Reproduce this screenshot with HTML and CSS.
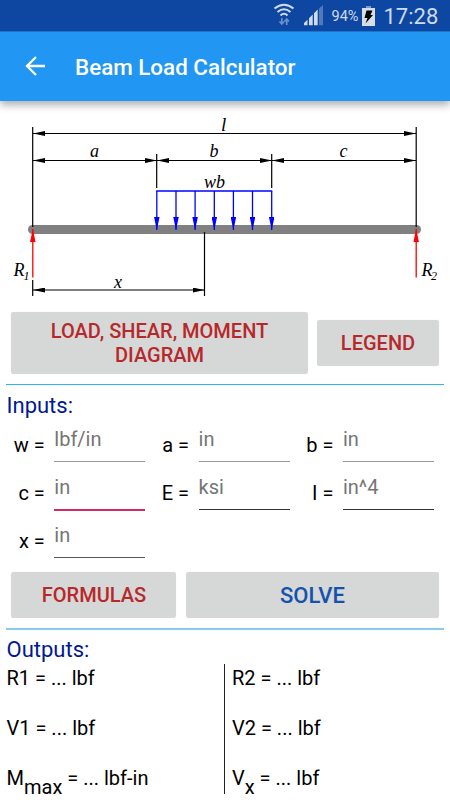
FILE: index.html
```html
<!DOCTYPE html>
<html lang="en">
<head>
<meta charset="utf-8">
<title>Beam Load Calculator</title>
<link rel="stylesheet" href="styles.css">
</head>
<body>
<header>
  <div class="status">
    <svg class="status-icons" width="54" height="31" viewBox="0 0 54 31">
      <g fill="none" stroke="#cfdaec" stroke-width="2">
        <path d="M1.500 8.500Q11 1 20.500 8.500"/><path d="M4.500 12Q11 6.500 17.500 12"/><path d="M7.500 15.500Q11 12 14.500 15.500"/>
      </g>
      <path d="M8.800 18v6M6.500 21.500l2.300 2.500 2.300-2.500M13.700 25v-6M11.400 21.500l2.300-2.500 2.300 2.500" fill="none" stroke="#6d8fc6" stroke-width="1.700"/>
      <path d="M31 25.300V23l3.500-3.300v5.600zM36 25.300v-7l3.700-3.700v10.700zM41 25.300V13.300l3.700-3.700v15.700z" fill="#cfdaec"/>
      <path d="M46 25.300V8.500L50 5v20.300z" fill="#5179b9"/>
    </svg>
    <span class="percent">94%</span>
    <svg class="battery" width="13" height="20" viewBox="0 0 13 20">
      <path d="M0 2h13v18H0z" fill="#d7deea"/>
      <path d="M4 0h5v2H4z" fill="#7c9acb"/>
      <path d="M4.500 4.500h6L8.500 9H11l-7.500 8.500L5.500 12H2.500z" fill="#000"/>
    </svg>
    <time class="clock">17:28</time>
  </div>
  <div class="appbar">
    <svg class="back" width="21" height="20" viewBox="0 0 21 20" fill="none" stroke="#fff" stroke-width="2.300"><path d="M20 10H2M11 1L2 10l9 9"/></svg>
    <h1>Beam Load Calculator</h1>
  </div>
</header>
<main>
  <svg class="diagram" width="450" height="200" viewBox="0 101 450 200">
    <defs>
      <marker id="k" viewBox="0 0 12 5" refX="12" refY="2.500" markerWidth="12" markerHeight="5" markerUnits="userSpaceOnUse" orient="auto-start-reverse"><path d="M0 0L12 2.500 0 5z"/></marker>
      <marker id="blue" viewBox="0 0 13 5" refX="13" refY="2.500" markerWidth="13" markerHeight="5.500" markerUnits="userSpaceOnUse" orient="auto" preserveAspectRatio="none"><path d="M0 0L13 2.500 0 5z" fill="#00f"/></marker>
      <marker id="red" viewBox="0 0 13 5" refX="13" refY="2.500" markerWidth="13" markerHeight="5.500" markerUnits="userSpaceOnUse" orient="auto" preserveAspectRatio="none"><path d="M0 0L13 2.500 0 5z" fill="red"/></marker>
    </defs>
    <path d="M32.500 229.500H416.500" stroke="#808080" stroke-width="9" stroke-linecap="round"/>
    <g stroke="#000" stroke-width="1.200" fill="none">
      <path d="M32.700 127V227M32.700 280V296M416.200 127V227M156.700 154V188M271.700 154V188M204.500 232V296"/>
      <g marker-start="url(#k)" marker-end="url(#k)">
        <path d="M33 133.500H416" /><path d="M33 160.500H157"/><path d="M157 160.500H272"/><path d="M272 160.500H416"/><path d="M33 290H204.500"/>
      </g>
    </g>
    <g stroke="#00f" stroke-width="1.300" fill="none">
      <path d="M156.200 191H272.200"/>
      <g marker-end="url(#blue)">
        <path d="M156.800 191V230"/><path d="M176 191V230"/><path d="M195.100 191V230"/><path d="M214.300 191V230"/><path d="M233.400 191V230"/><path d="M252.500 191V230"/><path d="M271.700 191V230"/>
      </g>
    </g>
    <g stroke="red" stroke-width="1.300" fill="none">
      <path d="M32.800 277.500V229" marker-end="url(#red)"/><path d="M416.200 277.500V229" marker-end="url(#red)"/>
    </g>
    <g class="dim">
      <text class="tall" x="221" y="130.500">l</text><text x="90" y="157">a</text><text x="209.500" y="157">b</text><text x="339.500" y="157">c</text>
      <text x="204" y="187.500">wb</text><text x="114" y="287.500">x</text>
      <text x="13.500" y="275.500">R</text><text class="small" x="23.500" y="279.500">1</text>
      <text x="421.500" y="275.500">R</text><text class="small" x="431" y="279.500">2</text>
    </g>
  </svg>
  <div class="buttons top">
    <button class="wide">LOAD, SHEAR, MOMENT<br>DIAGRAM</button>
    <button class="legend">LEGEND</button>
  </div>
  <hr>
  <h2>Inputs:</h2>
  <div class="fields">
    <label>w =<input placeholder="lbf/in"></label>
    <label>a =<input placeholder="in"></label>
    <label>b =<input placeholder="in"></label>
    <label>c =<input class="active" placeholder="in"></label>
    <label>E =<input class="dark" placeholder="ksi"></label>
    <label>I =<input class="dark" placeholder="in^4"></label>
    <label>x =<input class="mid" placeholder="in"></label>
  </div>
  <div class="buttons">
    <button class="formulas">FORMULAS</button>
    <button class="solve">SOLVE</button>
  </div>
  <hr class="pale">
  <h2>Outputs:</h2>
  <div class="outputs">
    <div class="col"><p>R1 = ... lbf</p><p>V1 = ... lbf</p><p>M<sub>max</sub> = ... lbf-in</p></div>
    <div class="col right"><p>R2 = ... lbf</p><p>V2 = ... lbf</p><p>V<sub>x</sub> = ... lbf</p></div>
  </div>
</main>
</body>
</html>
```
FILE: styles.css
```css
* { box-sizing: border-box; }
body { margin: 0; width: 450px; height: 800px; overflow: hidden; background: #fff; color: #000; font-family: Roboto, sans-serif; font-size: 20px; }
header { position: relative; height: 101px; background: #2196f3; box-shadow: 0 4px 8px rgba(0,0,0,.32); }
.status { display: flex; align-items: center; height: 31px; background: #0d47a1; color: #cfdaec; padding-left: 273px; }
.percent { font-size: 14.500px; width: 27px; margin-left: 4.500px; line-height: 31px; padding-top: 2px; }
.battery { margin-left: 3.500px; }
.clock { font-size: 22px; line-height: 31px; margin-left: 8.500px; padding-top: 2px; }
.appbar { display: flex; align-items: center; height: 70px; padding: 0 0 1px 25px; border-top: 1px solid #1a76cd; }
.back { display: block; }
h1 { margin: 2px 0 0 29px; color: #fff; font-size: 22.400px; font-weight: 500; line-height: 28px; }
.diagram { display: block; }
.dim { font: italic 18px "Liberation Serif", serif; }
.tall { font-size: 19px; }
.small { font-size: 12px; }
.buttons { display: flex; align-items: center; gap: 10px; padding: 0 11px; }
.buttons.top { height: 62px; margin-top: 11px; }
button { border: 0; border-radius: 3px; background: #d6d7d7; box-shadow: 0 0 1px rgba(0,0,0,.15); padding: 0; color: #b7282b; font: 500 20px/24px Roboto, sans-serif; height: 46px; }
.wide { width: 297px; height: 62px; }
.legend { width: 122px; margin-left: -1px; }
.formulas { width: 165px; padding-left: 1px; }
.solve { width: 253px; padding-top: 2px; color: #1353ad; font-size: 22px; }
hr { height: 1px; margin: 10px 6px 0; border: 0; background: #29b6f6; }
hr.pale { height: 2px; background: #87cceb; }
h2 { margin: 7px 0 0 6.500px; color: #001896; font-size: 22px; font-weight: 400; line-height: 28px; }
.fields { display: grid; grid-template-columns: repeat(3, 144.300px); grid-auto-rows: 48px; height: 145px; margin-top: 1px; padding-left: 1px; }
label { display: flex; justify-content: flex-end; align-items: flex-start; line-height: 24px; padding-top: 12px; white-space: pre; }
input { width: 91px; height: 40px; margin: -11px 0 0 9.500px; padding: 2px 0 7px; border: 0; border-bottom: 1px solid #999; border-radius: 0; outline: 0; background: transparent; font: 20px/24px Roboto, sans-serif; }
input::placeholder { color: #757575; opacity: 1; }
input.active { height: 41px; border-bottom: 2px solid #d02b62; }
input.dark { border-color: #333; }
input.mid { border-color: #555; }
.fields + .buttons { margin-top: 6px; }
.pale + h2 { margin-top: 6px; }
.outputs { display: flex; height: 130px; }
.col { width: 224px; padding-left: 6.500px; }
.right { border-left: 1px solid #222; padding-left: 7px; }
p { margin: 0; height: 50px; line-height: 28px; }
sub { vertical-align: -9px; line-height: 0; font-size: 20px; }
```
